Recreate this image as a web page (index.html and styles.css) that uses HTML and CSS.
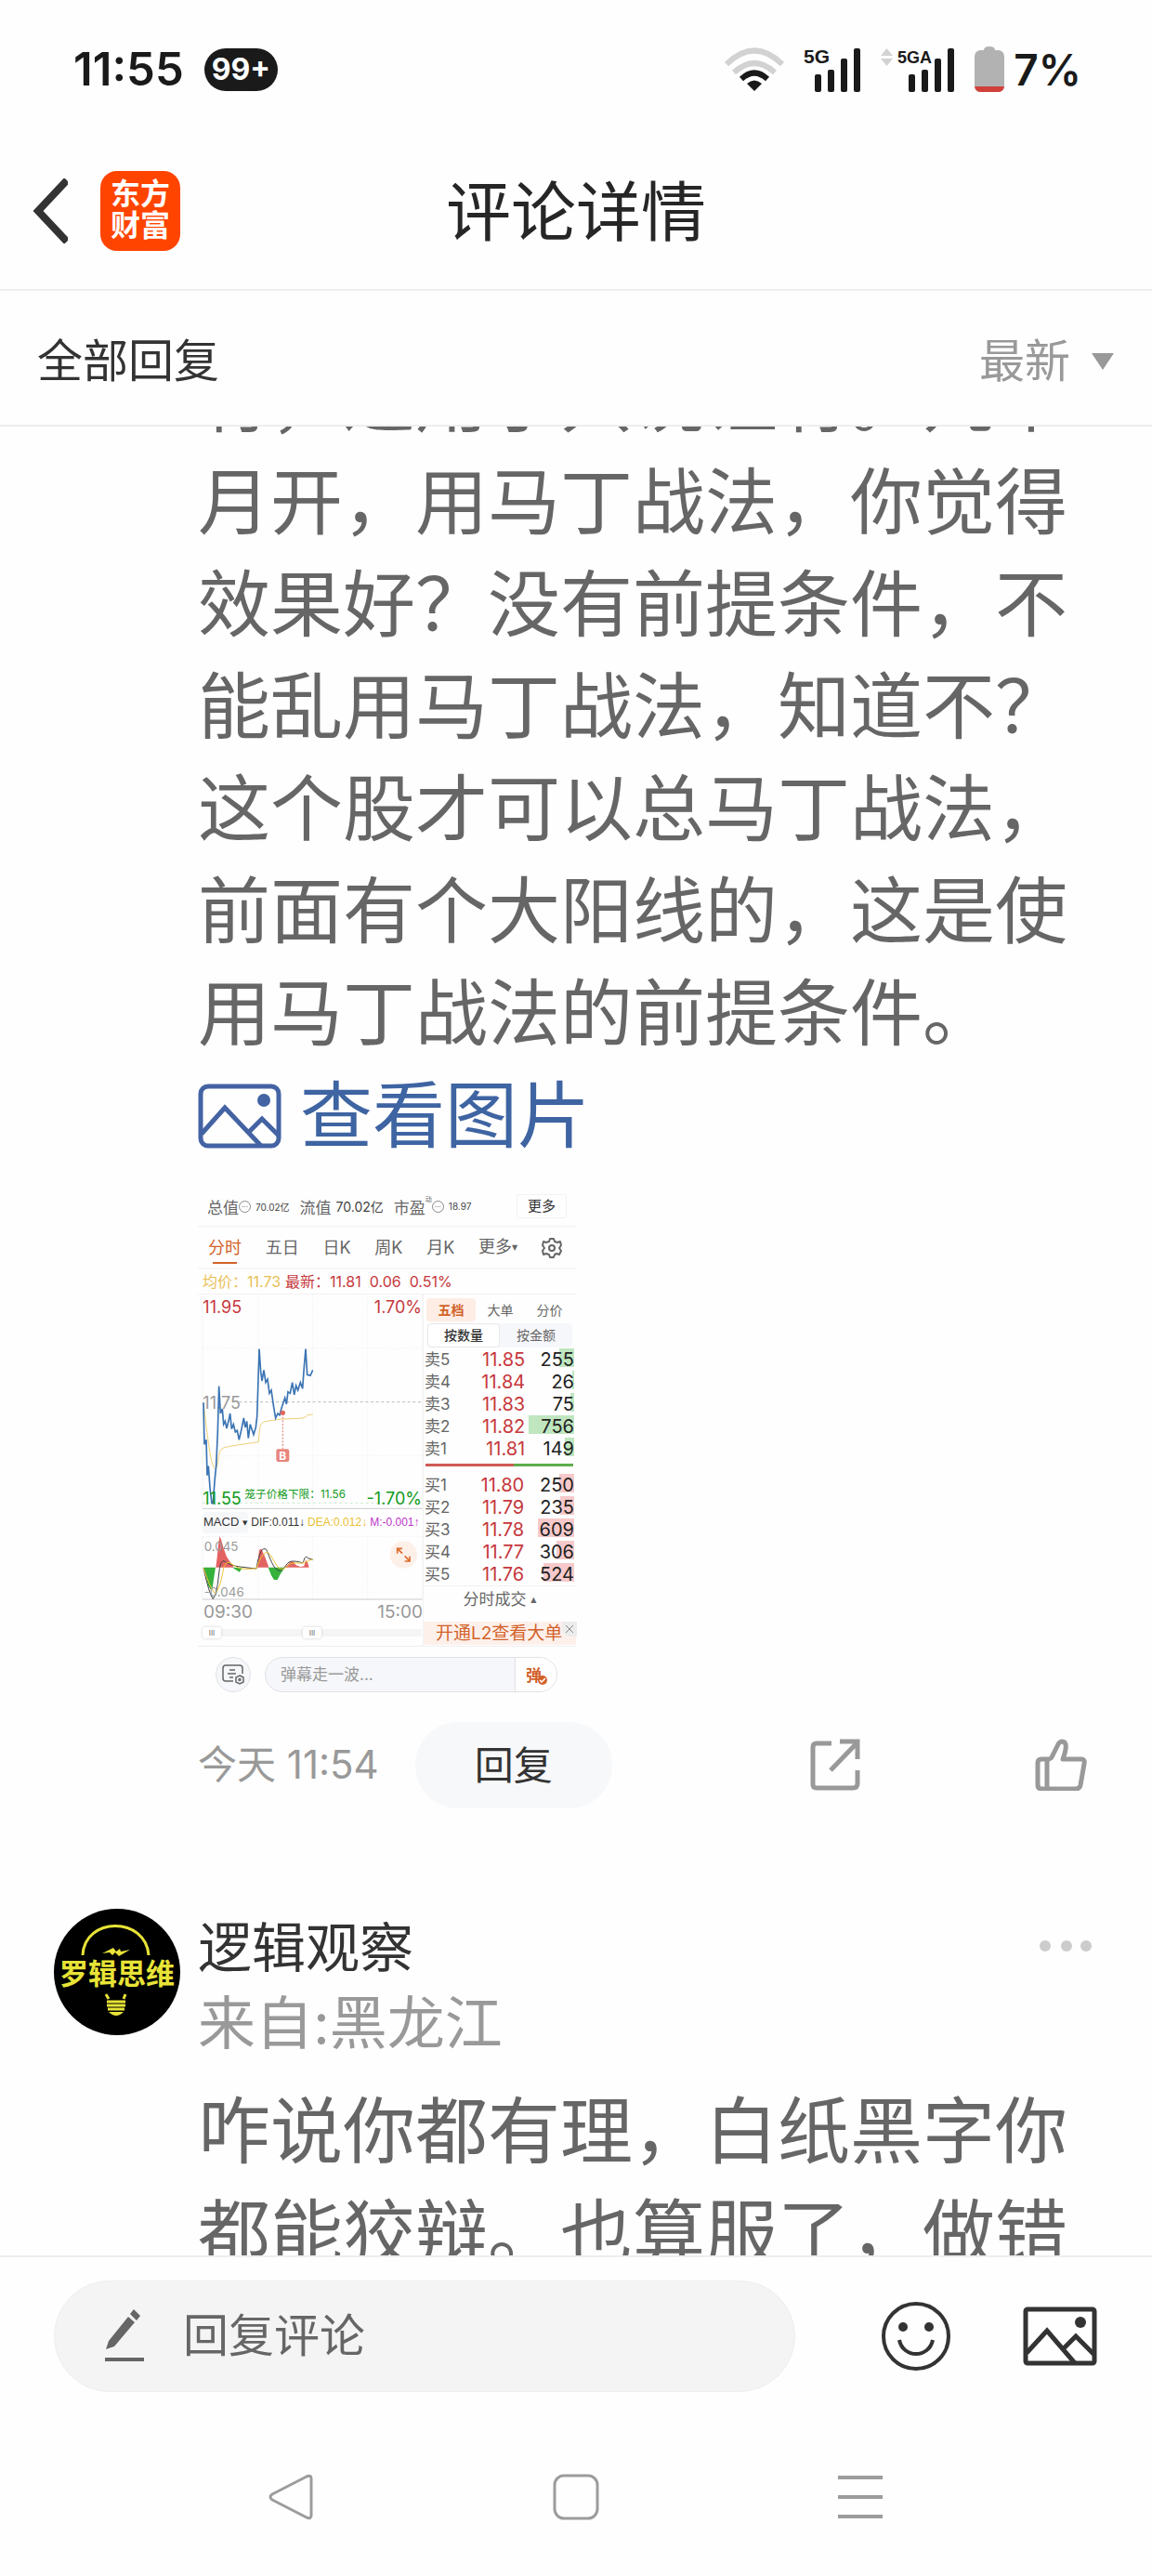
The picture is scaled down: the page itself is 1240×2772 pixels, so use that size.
FILE: index.html
```html
<!DOCTYPE html>
<html lang="zh-CN">
<head>
<meta charset="utf-8">
<meta name="viewport" content="width=device-width">
<title>评论详情</title>
<link rel="stylesheet" href="styles.css">
</head>
<body>
<div class="screen">
  <div class="status">
    <span class="clock">11:55</span>
    <span class="count">99+</span>
    <div class="signals">
      <svg class="wifi" width="64" height="48" viewBox="0 0 64 48" fill="none" stroke-width="6">
        <path d="M2 18Q32-11 62 18" stroke="#d2d2d2"/>
        <path d="M10 27Q32 7 54 27" stroke="#d2d2d2"/>
        <path d="M18 34Q32 21 46 34" stroke="#1a1a1a"/>
        <path d="M24 39Q32 32 40 39L32 47Z" fill="#1a1a1a"/>
      </svg>
      <svg width="62" height="50" viewBox="0 0 62 50" fill="#1a1a1a">
        <text class="net" x="0" y="18">5G</text>
        <rect x="12" y="30" width="7" height="19" rx="2"/><rect x="26" y="25" width="7" height="24" rx="2"/><rect x="40" y="13" width="7" height="36" rx="2"/><rect x="54" y="2" width="7" height="47" rx="2"/>
      </svg>
      <svg width="80" height="50" viewBox="0 0 80 50" fill="#1a1a1a">
        <path d="M0 10 6.500 2 13 10ZM0 13 6.500 21 13 13Z" fill="#d2d2d2"/>
        <text class="net small" x="18" y="18">5GA</text>
        <rect x="30" y="30" width="7" height="19" rx="2"/><rect x="44" y="25" width="7" height="24" rx="2"/><rect x="58" y="13" width="7" height="36" rx="2"/><rect x="72" y="2" width="7" height="47" rx="2"/>
      </svg>
      <svg width="32" height="50" viewBox="0 0 32 50">
        <path d="M10 4Q10 0 16 0T22 4H26Q32 5 32 11V42Q32 49 25 49H7Q0 49 0 42V11Q0 5 6 4Z" fill="#b2b2b2"/>
        <path d="M0 43H32Q31 49 25 49H7Q1 49 0 43Z" fill="#d0413a"/>
      </svg>
      <span class="percent">7%</span>
    </div>
  </div>

  <header class="header">
    <button class="icon-btn" aria-label="返回">
      <svg width="40" height="70" viewBox="0 0 40 70" fill="none" stroke="#333" stroke-width="8"><path d="M39 2 8 35 39 68"/></svg>
    </button>
    <a class="logo" href="#">东方<br>财富</a>
    <h1>评论详情</h1>
  </header>

  <div class="filter">
    <h2>全部回复</h2>
    <label class="sort">
      <select aria-label="排序"><option>最新</option></select>
      <svg width="24" height="20" viewBox="0 0 24 20" fill="#999"><path d="M0 1H24L12 19Z"/></svg>
    </label>
  </div>

  <main class="feed">
    <article class="comment scrolled">
      <div class="side"></div>
      <div class="content">
        <p class="text">有，适用于只说证有。几个月开，用马丁战法，你觉得效果好？没有前提条件，不能乱用马丁战法，知道不？这个股才可以总马丁战法，前面有个大阳线的，这是使用马丁战法的前提条件。</p>
        <a class="view" href="#">
          <svg width="90" height="70" viewBox="0 0 90 70" fill="none" stroke="#4463a3" stroke-width="5">
            <rect x="3" y="3" width="84" height="64" rx="8"/>
            <path d="M4 54 29 26 68 67M56 51 69 38 87 56"/><circle cx="71" cy="18" r="7" fill="#4463a3" stroke="none"/>
          </svg>查看图片
        </a>

        <div class="shot">
          <div class="stats">
            <span>总值</span><i class="ring">···</i><small>70.02亿</small>
            <span class="gap">流值</span><b>70.02亿</b>
            <span class="gap">市盈</span><sup>动</sup><i class="ring">···</i><small>18.97</small>
            <button>更多</button>
          </div>
          <div class="periods">
            <button class="on">分时</button><button>五日</button><button>日K</button><button>周K</button><button>月K</button><button>更多<span class="caret">▼</span></button>
            <svg width="22" height="22" viewBox="0 0 22 22" fill="none" stroke="#666" stroke-width="2"><path d="M9 1H13L14 4 17 5 20 4 21 8 19 11 21 14 19 18 16 17 14 18 13 21H9L8 18 5 17 2 18 1 14 3 11 1 8 2 4 5 5 8 4Z" stroke-linejoin="round"/><circle cx="11" cy="11" r="3"/></svg>
          </div>
          <div class="quote"><span class="avg">均价：11.73</span><span>最新：11.81</span><span>0.06</span><span>0.51%</span></div>
          <div class="market">
            <div class="charts">
              <svg class="price" viewBox="39 -204 726 693">
                <g fill="none" stroke="#efeff1" stroke-width="2"><path d="M54-204V489M764-204V489"/><path d="M234-204V489M410-204V489M587-204V489M54-30H764M54 317H764" stroke-dasharray="6 4"/></g>
                <path d="M172 143H764" stroke="#bbb" stroke-width="3" stroke-dasharray="9 8"/>
                <path d="M54 469H764" stroke="#b2dcb8" stroke-width="2" stroke-dasharray="9 8"/>
                <path d="M54 487H764" stroke="#ccc" stroke-width="3"/>
                <text x="55" y="-144" class="n red">11.95</text><text x="762" y="-144" class="n red end">1.70%</text>
                <text x="55" y="165" class="n grey">11.75</text>
                <path d="M57 145C70 250 80 355 95 358C108 355 100 300 120 292S200 278 235 272C240 200 240 210 280 202S370 200 385 192L395 185 410 183" fill="none" stroke="#efcf74" stroke-width="3"/>
                <path d="M57 145 60 280 66 265 69 380 73 350 78 420 84 470 88 470 93 400 98 350 103 240 107 92 112 180 118 165 122 215 127 205 132 228 138 205 143 180 148 230 154 215 160 240 166 235 172 265 180 230 187 195 192 225 197 205 202 260 208 215 213 230 219 248 226 225 230 190 233 100 237-28 242 45 246 75 252 40 258 80 264 70 270 115 276 105 284 160 290 195 297 180 303 185 310 160 320 130 325 150 330 110 337 115 344 80 350 120 356 90 362 105 370 80 377 100 382 30 387-28 392 55 402 58 410 40" fill="none" stroke="#3b74b3" stroke-width="5"/>
                <path d="M313 180V294" stroke="#e2746c" stroke-width="3" stroke-dasharray="6 5"/><circle cx="313" cy="178" r="8" fill="#df6660"/>
                <rect x="292" y="295" width="42" height="41" rx="7" fill="#e8857c"/><text x="313" y="329" class="mark">B</text>
                <text x="55" y="474" class="n green">11.55</text><text x="190" y="453" class="limit green">笼子价格下限：11.56</text><text x="762" y="474" class="n green end">-1.70%</text>
              </svg>
              <div class="macd"><button>MACD <span class="caret">▼</span></button><span>DIF:0.011↓</span><span class="dea">DEA:0.012↓</span><span class="m">M:-0.001↑</span></div>
              <svg class="price" viewBox="39 571 726 207">
                <g fill="none" stroke="#efeff1" stroke-width="2"><path d="M54 571V776M764 571V776"/><path d="M54 572H764M234 571V776M410 571V776M587 571V776" stroke-dasharray="6 4"/></g>
                <path d="M54 775H764" stroke="#ccc" stroke-width="3"/>
                <path d="M97 672 101 640 106 590 110 571 115 585 122 610 132 638 146 658 155 672ZM231 672 237 615 244 612 254 634 264 660 268 672ZM318 672 328 664 338 654 346 652 356 665 370 670 382 668 387 648 393 655 398 672Z" fill="#e36262"/>
                <path d="M57 672 63 695 72 730 80 743 86 738 90 710 96 672ZM150 672 162 680 173 687 182 674ZM266 672 276 698 285 712 296 712 305 694 316 678 320 672Z" fill="#35b13c"/>
                <path d="M57 674Q76 760 88 774Q101 755 106 700Q111 640 127 653T175 670 228 676Q240 600 260 614C272 640 282 680 303 683C325 678 320 650 350 652S375 665 381 650Q386 630 396 643L410 647" fill="none" stroke="#444" stroke-width="3"/>
                <path d="M57 674Q75 730 95 758Q110 740 119 690Q126 640 150 662T228 675Q242 630 262 622C280 630 290 675 310 678C335 670 330 655 360 658S390 650 410 646" fill="none" stroke="#f0c330" stroke-width="3"/>
                <text x="59" y="620" class="s grey">0.045</text><text x="59" y="766" class="s grey">-0.046</text>
                <circle cx="703" cy="631" r="44" fill="#fdf0e9"/><path d="M699 627 683 611M683 627V611H699M707 635 723 652M707 652H723V636" fill="none" stroke="#db6b2c" stroke-width="5"/>
              </svg>
              <div class="axis"><span>09:30</span><span>15:00</span></div>
              <div class="range"><i>III</i><i>III</i></div>
            </div>
            <div class="book">
              <div class="modes"><button class="on">五档</button><button>大单</button><button>分价</button></div>
              <div class="units"><button class="on">按数量</button><button>按金额</button></div>
              <table class="sell">
                <tr><th>卖5</th><td>11.85</td><td><span style="--w:16px">255</span></td></tr>
                <tr><th>卖4</th><td>11.84</td><td><span style="--w:2px">26</span></td></tr>
                <tr><th>卖3</th><td>11.83</td><td><span style="--w:4px">75</span></td></tr>
                <tr><th>卖2</th><td>11.82</td><td><span style="--w:49px">756</span></td></tr>
                <tr><th>卖1</th><td>11.81</td><td><span style="--w:10px">149</span></td></tr>
              </table>
              <div class="balance"></div>
              <table class="buy">
                <tr><th>买1</th><td>11.80</td><td><span style="--w:16px">250</span></td></tr>
                <tr><th>买2</th><td>11.79</td><td><span style="--w:15px">235</span></td></tr>
                <tr><th>买3</th><td>11.78</td><td><span style="--w:39px">609</span></td></tr>
                <tr><th>买4</th><td>11.77</td><td><span style="--w:19px">306</span></td></tr>
                <tr><th>买5</th><td>11.76</td><td><span style="--w:33px">524</span></td></tr>
              </table>
              <button class="deals">分时成交 <span class="caret">▲</span></button>
              <div class="promo"><a href="#">开通L2查看大单</a><button aria-label="关闭"><svg width="10" height="10" viewBox="0 0 10 10" stroke="#888"><path d="M1 1 9 9M9 1 1 9"/></svg></button></div>
            </div>
          </div>
          <div class="barrage">
            <button class="round" aria-label="弹幕设置"><svg width="24" height="22" viewBox="0 0 24 22" fill="none" stroke="#666" stroke-width="1.500"><path d="M12 18H4Q1 18 1 15V4Q1 1 4 1H19Q22 1 22 4V10M8 6H14M6 10H15M8 14H12"/><path d="M19 12 23 14V19L19 21 15 19V14Z"/><circle cx="19" cy="16.500" r="1"/></svg></button>
            <div class="say"><input aria-label="弹幕" placeholder="弹幕走一波..."><button class="dan">弹<svg width="10" height="10" viewBox="0 0 10 10"><circle cx="5" cy="5" r="5" fill="#d2622a"/><path d="M2 5 4 7 8 3" fill="none" stroke="#fff" stroke-width="1.500"/></svg></button></div>
          </div>
        </div>

        <div class="meta">
          <time>今天 11:54</time>
          <button class="reply">回复</button>
          <div class="acts">
            <button class="icon-btn" aria-label="分享"><svg width="54" height="56" viewBox="0 0 54 56" fill="none" stroke="#999" stroke-width="5"><path d="M23 5H7Q3 5 3 9V49Q3 53 7 53H46Q51 53 51 48V34M32 3H51V22M51 4 22 34"/></svg></button>
            <button class="icon-btn" aria-label="赞"><svg width="56" height="56" viewBox="0 0 56 56" fill="none" stroke="#999" stroke-width="5" stroke-linejoin="round"><path d="M16 22H7Q3 22 3 26V49Q3 54 7 54H44Q48 54 49 50L53 27Q54 22 50 22H30Q37 3 29 3Q26 3 24 8L18 20Q17 22 13 22V54"/></svg></button>
          </div>
        </div>
      </div>
    </article>

    <article class="comment">
      <div class="side">
        <svg class="avatar" width="136" height="136" viewBox="0 0 136 136">
          <circle cx="68" cy="68" r="68"/>
          <g fill="none" stroke="#e8e337" stroke-width="3"><path d="M31 50C33 8 99 8 102 50M56 92 59 97M77 92 75 97M57 100H77M57 104H77M58 108H76"/></g>
          <path d="M52 48 64 42 67 46 71 43 72 46 82 44 70 51 66 47 63 50 60 47ZM59 111H75Q67 119 59 111Z" fill="#e8e337"/>
          <text x="68" y="81">罗辑思维</text>
        </svg>
      </div>
      <div class="content">
        <div class="who"><a class="name" href="#">逻辑观察</a><button class="icon-btn" aria-label="更多"><svg width="58" height="18" viewBox="0 0 58 18" fill="#ccc"><circle cx="7" cy="7" r="6"/><circle cx="30" cy="7" r="6"/><circle cx="51" cy="7" r="6"/></svg></button></div>
        <div class="from">来自:黑龙江</div>
        <p class="text">咋说你都有理，白纸黑字你都能狡辩。也算服了，做错</p>
      </div>
    </article>
  </main>

  <footer class="composer">
    <div class="field">
      <svg width="44" height="58" viewBox="0 0 44 58" fill="#666"><path d="M1 43 4 34 25 8 32 14 10 40ZM27 5 31 0 38 7 34 12ZM0 52H42V56H0Z"/></svg>
      <input aria-label="回复评论" placeholder="回复评论">
    </div>
    <div class="tools">
      <button class="icon-btn" aria-label="表情">
        <svg width="76" height="76" viewBox="0 0 76 76" fill="none" stroke="#333" stroke-width="4"><circle cx="38" cy="38" r="35"/><path d="M20 42C24 62 52 62 56 42"/><circle cx="24" cy="28" r="5" fill="#333" stroke="none"/><circle cx="52" cy="28" r="5" fill="#333" stroke="none"/></svg>
      </button>
      <button class="icon-btn" aria-label="相册">
        <svg width="80" height="64" viewBox="0 0 80 64" fill="none" stroke="#333" stroke-width="5"><rect x="3" y="3" width="74" height="58" rx="2"/><path d="M4 50 26 26 56 61M43 46 57 32 77 52"/><circle cx="62" cy="17" r="6" fill="#333" stroke="none"/></svg>
      </button>
    </div>
  </footer>

  <nav class="nav">
    <button class="icon-btn" aria-label="后退"><svg width="50" height="50" viewBox="0 0 50 50" fill="none" stroke="#9c9c9c" stroke-width="3" stroke-linejoin="round"><path d="M4 22 41 3Q46 1 46 5V45Q46 49 41 47L4 28Q0 25 4 22Z"/></svg></button>
    <button class="icon-btn" aria-label="主页"><svg width="50" height="50" viewBox="0 0 50 50" fill="none" stroke="#9c9c9c" stroke-width="3"><rect x="2" y="2" width="46" height="46" rx="10"/></svg></button>
    <button class="icon-btn" aria-label="菜单"><svg width="50" height="50" viewBox="0 0 50 50" stroke="#9c9c9c" stroke-width="4"><path d="M1 4H49M1 25H49M1 46H49"/></svg></button>
  </nav>
</div>
</body>
</html>
```
FILE: styles.css
```css
* { box-sizing: border-box; }
body {
  margin: 0;
  background: #fefefe;
  color: #333;
  font-family: Inter, "Noto Sans CJK SC", sans-serif;
}
button, input, select {
  margin: 0;
  padding: 0;
  border: 0;
  background: none;
  color: inherit;
  font: inherit;
}
a { color: inherit; text-decoration: none; }
h1, h2, p { margin: 0; font-weight: 400; }
svg { display: block; flex: none; }
i { font-style: normal; }

.screen { display: flex; flex-direction: column; height: 100vh; overflow: hidden; }
.icon-btn { display: flex; flex: none; }

/* status bar */
.status {
  display: flex;
  align-items: center;
  padding: 45px 76px 41px 79px;
  color: #1a1a1a;
  font-weight: 600;
  line-height: 60px;
}
.clock { font-size: 49px; }
.count {
  margin-left: 22px;
  padding: 0 8px;
  border-radius: 23px;
  background: #1a1a1a;
  color: #fff;
  font-size: 32px;
  font-weight: 700;
  line-height: 46px;
}
.signals { display: flex; align-items: center; gap: 21px; margin-left: auto; }
.percent { margin-left: -11px; font-size: 46px; }
.net { font: 700 21px "Liberation Sans", sans-serif; }
.net.small { font-size: 18px; }

/* title bar */
.header {
  display: grid;
  grid-template-columns: 75px 1fr 75px;
  align-items: center;
  padding: 29px 33px 32px;
  border-bottom: 2px solid #eee;
}
.logo {
  grid-area: 1 / 2;
  justify-self: start;
  width: 86px;
  padding: 8px 0 10px;
  border-radius: 18px;
  background: #ff4400;
  color: #fff;
  font-size: 32px;
  font-weight: 700;
  line-height: 34px;
  text-align: center;
}
.header h1 {
  grid-area: 1 / 2;
  justify-self: center;
  padding-top: 4px;
  color: #262626;
  font-size: 70px;
  line-height: 100px;
}

/* filter */
.filter {
  display: flex;
  align-items: center;
  justify-content: space-between;
  padding: 40px 41px 32px 40px;
  border-bottom: 2px solid #eee;
  font-size: 49px;
  line-height: 72px;
}
.filter h2 { font-size: 49px; }
.sort { display: flex; align-items: center; gap: 22px; color: #999; }
.sort select { appearance: none; }

/* comments */
.feed { flex: 1; min-height: 0; overflow: hidden; }
.comment { display: grid; grid-template-columns: 155px 1fr; padding: 0 64px 0 58px; }
.comment + .comment { margin-top: 108px; }
.scrolled { margin-top: -83px; }
.content { min-width: 0; }
.text { color: #666; font-size: 78px; line-height: 110px; }
.view {
  display: flex;
  align-items: center;
  gap: 20px;
  color: #3e64a2;
  font-size: 78px;
  line-height: 110px;
}
.meta { display: flex; align-items: center; margin-top: 26px; font-size: 42px; line-height: 64px; }
.meta time { color: #999; }
.reply { margin-left: 39px; padding: 15px 64px 14px; border-radius: 47px; background: #f7f8fa; }
.acts { display: flex; gap: 188px; margin: 0 6px 0 auto; }
.avatar text { fill: #e8e337; font-size: 31px; font-weight: 700; text-anchor: middle; }
.who { display: flex; align-items: center; justify-content: space-between; }
.name { font-size: 58px; line-height: 84px; }
.from { margin-bottom: 21px; color: #999; font-size: 62px; line-height: 80px; }

/* trading screen attached to the comment */
.shot { width: 407px; margin-top: 27px; color: #666; font-size: 17px; }
.shot button { white-space: nowrap; }
.stats { display: flex; align-items: center; height: 38px; padding: 0 10px 6px; border-bottom: 2px solid #f7f7f7; }
.stats small { margin-left: 5px; color: #444; font-size: 10px; }
.stats b { margin-left: 5px; color: #444; font-size: 14px; font-weight: 400; }
.stats .gap { margin-left: 11px; }
.stats sup { align-self: flex-start; font-size: 7px; line-height: 16px; }
.stats button { margin-left: auto; padding: 0 11px; border: 1px solid #f2f2f2; border-radius: 3px; color: #333; font-size: 15px; line-height: 24px; }
.ring { width: 13px; height: 13px; border: 1px solid #888; border-radius: 50%; font-size: 8px; line-height: 10px; text-align: center; }
.caret { font-family: "DejaVu Sans", sans-serif; font-size: 8px; vertical-align: middle; }
.periods {
  display: flex;
  align-items: center;
  justify-content: space-between;
  padding: 0 15px 0 11px;
  border-bottom: 2px solid #f7f7f7;
  font-size: 18px;
  line-height: 42px;
}
.periods .on { color: #d2622a; background: linear-gradient(#d2622a, #d2622a) center 36px / 26px 2px no-repeat; }
.quote { display: flex; gap: 9px; padding-left: 5px; border-bottom: 1px solid #f2f2f2; color: #c6373c; font-size: 16px; line-height: 26px; }
.quote .avg { color: #e8bf55; }
.quote .avg + span { margin-left: -4px; }
.market { display: grid; grid-template-columns: 242px 165px; border-bottom: 1px solid #eee; }
.price { width: 100%; height: auto; }
.n { font-size: 54px; }
.s { font-size: 40px; }
.limit { font-size: 35px; }
.mark { fill: #fff; font-size: 36px; font-weight: 700; text-anchor: middle; }
.end { text-anchor: end; }
.red { fill: #c6373c; }
.green { fill: #129a1c; }
.grey { fill: #999; }
.macd {
  display: flex;
  align-items: center;
  gap: 3px;
  margin: 3px 0 3px 5px;
  color: #333;
  font: 12px/22px "Liberation Sans", sans-serif;
  white-space: nowrap;
}
.macd button { padding: 0 1px; background: #f6f7f9; border-radius: 3px; font-size: 13px; }
.macd .caret { font-size: 7px; }
.macd .dea { color: #eabf31; }
.macd .m { color: #bb35c8; }
.axis { display: flex; justify-content: space-between; padding: 0 0 0 6px; color: #999; font-size: 19px; line-height: 26px; }
.range {
  display: flex;
  gap: 88px;
  margin: 3px 1px 8px 5px;
  background: linear-gradient(#f5f5f7, #f5f5f7) center / 100% 8px no-repeat;
}
.range i { width: 20px; border-radius: 3px; background: #fff; box-shadow: 0 0 3px #ccc; font-size: 8px; line-height: 12px; text-align: center; }
.book { padding-top: 4px; border-left: 1px solid #f2f2f2; }
.modes { display: grid; grid-template-columns: repeat(3, 53px); padding-left: 3px; font-size: 14px; line-height: 25px; }
.modes .on { border-radius: 4px; background: #feede4; color: #d2622a; font-weight: 700; }
.units { display: grid; grid-template-columns: 1fr 1fr; margin: 2px 4px 1px; border-radius: 4px; background: #f6f7fa; font-size: 14px; line-height: 24px; }
.units button { border: 1px solid transparent; }
.units .on { border-color: #e8e8ea; border-radius: 4px; background: #fff; color: #333; font-weight: 500; }
table { width: 161px; margin-left: 1px; border-collapse: collapse; line-height: 24px; }
th { padding: 0; font-size: 17px; font-weight: 400; text-align: left; }
td { padding: 0; color: #c6373c; font-size: 20px; text-align: right; }
td + td { color: #222; }
td span { display: block; background: linear-gradient(var(--bar), var(--bar)) right top / var(--w) 20px no-repeat; }
.sell { --bar: #bfe6bf; }
.buy { --bar: #f7c9ca; }
.balance { height: 3px; margin: 4px 3px 8px 2px; background: linear-gradient(90deg, #d05a55 60%, #5fad4b 60%); }
.deals { display: block; width: 100%; border-top: 1px solid #f2f2f2; font-size: 17px; line-height: 28px; }
.promo { display: flex; align-items: flex-start; justify-content: space-between; margin-top: 9px; padding-left: 13px; background: #fdf0ea; color: #d2622a; font-size: 19px; line-height: 25px; white-space: nowrap; }
.promo button { padding: 3px; border-bottom-left-radius: 8px; background: #ececec; }
.barrage { display: flex; gap: 15px; padding: 11px 19px 6px; }
.round { display: grid; place-items: center; width: 38px; height: 38px; border: 1px solid #e2e2e5; border-radius: 50%; background: #f6f7fa; }
.say { display: flex; width: 315px; border: 1px solid #e2e2e5; border-radius: 19px; background: #f6f7fa; overflow: hidden; }
.say input { flex: 1; min-width: 0; padding-left: 16px; }
.say input::placeholder { color: #999; }
.dan { display: flex; align-items: center; width: 45px; padding-left: 11px; border-left: 1px solid #e2e2e5; background: #fefefe; color: #d2622a; font-weight: 700; }
.dan svg { align-self: flex-end; margin: 0 0 7px -4px; }

/* reply box */
.composer {
  display: flex;
  align-items: center;
  gap: 92px;
  padding: 25px 59px 28px 58px;
  border-top: 2px solid #eee;
  background: #fefefe;
}
.field {
  display: flex;
  flex: 1;
  align-items: center;
  gap: 40px;
  min-width: 0;
  padding: 23px 54px;
  border: 1px solid #eee;
  border-radius: 60px;
  background: #f4f4f4;
}
.field input { flex: 1; min-width: 0; font-size: 49px; line-height: 72px; height: 72px; }
.field input::placeholder { color: #666; opacity: 1; }
.tools { display: flex; flex: none; align-items: center; gap: 77px; }
.nav { display: flex; justify-content: center; gap: 256px; padding: 60px 0; }
```
